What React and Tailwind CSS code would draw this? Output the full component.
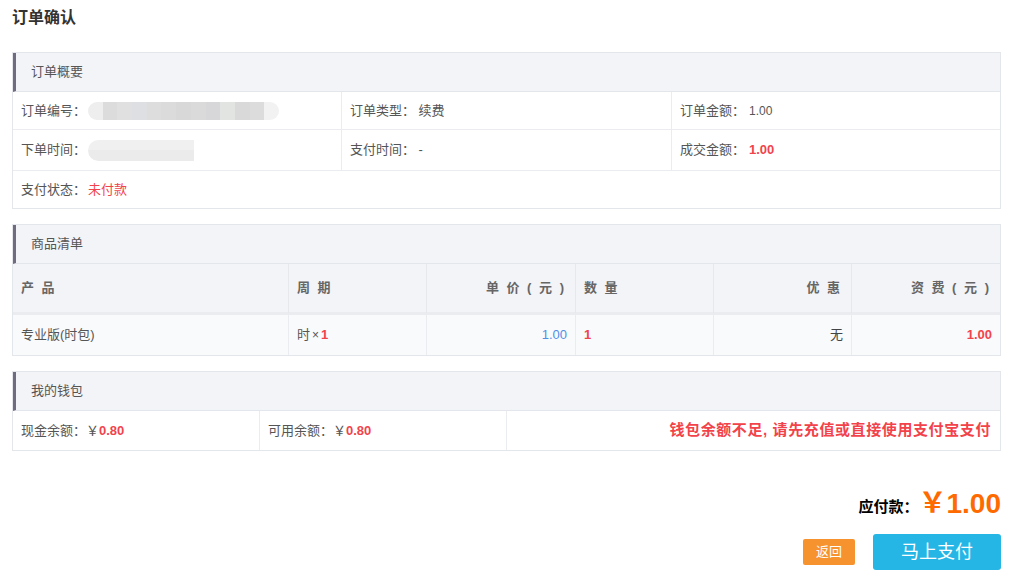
const font = "font-['Liberation_Sans','Noto_Sans_CJK_SC',sans-serif]"

function SectionHead({ title }) {
  return (
    <div className="h-[39px] flex items-center bg-[#f3f4f7] border-b border-[#e3e6eb] border-l-[3px] border-l-[#6f6c80] pl-[15px] text-[13px] text-[#555]">
      {title}
    </div>
  )
}

function Blur({ w, cells }) {
  return (
    <span className="inline-flex h-[18px] rounded-full overflow-hidden align-middle" style={{ width: w }}>
      {cells.map((c, i) => (
        <span key={i} className="flex-1 h-full" style={{ backgroundColor: c }} />
      ))}
    </span>
  )
}

export default function App() {
  return (
    <div className={`${font} bg-white w-[1011px] h-[583px] pl-[12px] pr-[10px] pt-[7px] text-[13px] text-[#555]`}>
      <h1 className="text-[16px] font-bold text-[#333] h-[22px] leading-[22px]">订单确认</h1>

      {/* 订单概要 */}
      <div className="mt-[23px] border border-[#e3e6eb]">
        <SectionHead title="订单概要" />
        <div className="grid grid-cols-[329px_330px_1fr]">
          <div className="h-[38px] flex items-center pl-[8px] border-b border-r border-[#eaecef]">
            订单编号：
            <span className="ml-[2px]">
              <Blur w={191} cells={['#eeeeee', '#dcdcdc', '#e0e0e0', '#dedfe2', '#dddddd', '#dcdbdb', '#d9d8d9', '#dadada', '#d7d7d9', '#e2e4e2', '#d9d9d9', '#dcdcdc', '#f2f2f2']} />
            </span>
          </div>
          <div className="h-[38px] flex items-center pl-[8px] border-b border-r border-[#eaecef]">订单类型： 续费</div>
          <div className="h-[38px] flex items-center pl-[8px] border-b border-[#eaecef]">订单金额： <span className="ml-[4px] text-[12px]">1.00</span></div>

          <div className="h-[41px] flex items-center pl-[8px] border-b border-r border-[#eaecef]">
            下单时间：
            <span className="ml-[2px] inline-flex flex-col w-[106px] h-[21px] overflow-hidden rounded-l-full">
              <span className="flex-1 bg-[#f0f0f0]" />
              <span className="flex-1 bg-[#ebebeb]" />
            </span>
          </div>
          <div className="h-[41px] flex items-center pl-[8px] border-b border-r border-[#eaecef]">支付时间： -</div>
          <div className="h-[41px] flex items-center pl-[8px] border-b border-[#eaecef]">
            成交金额：<span className="ml-[4px] text-[#f2434b] font-bold">1.00</span>
          </div>

          <div className="col-span-3 h-[37px] flex items-center pl-[8px]">
            支付状态：<span className="ml-[2px] text-[#f2434b]">未付款</span>
          </div>
        </div>
      </div>

      {/* 商品清单 */}
      <div className="mt-[15px] border border-[#e3e6eb]">
        <SectionHead title="商品清单" />
        <div className="grid grid-cols-[276px_138px_149px_138px_138px_1fr]">
          {[
            ['产 品', 'left'],
            ['周 期', 'left'],
            ['单 价 ( 元 )', 'right'],
            ['数 量', 'left'],
            ['优 惠', 'right'],
            ['资 费 ( 元 )', 'right'],
          ].map(([t, a], i) => (
            <div
              key={i}
              className={`h-[51px] flex items-center pl-[8px] pr-[9px] bg-[#f3f4f7] border-b-[3px] border-[#ebecef] font-bold tracking-[2px] text-[#666] ${a === 'right' ? 'justify-end' : ''} ${i < 5 ? 'border-r border-r-[#e6e8eb]' : ''}`}
            >
              {t}
            </div>
          ))}
          <div className="h-[40px] flex items-center px-[8px] bg-[#f9fafc] border-r border-[#eaecef]">专业版(时包)</div>
          <div className="h-[40px] flex items-center px-[8px] bg-[#f9fafc] border-r border-[#eaecef]">
            时<span className="mx-[2px] text-[12px]">×</span><span className="text-[#f2434b] font-bold">1</span>
          </div>
          <div className="h-[40px] flex items-center justify-end px-[8px] bg-[#f9fafc] border-r border-[#eaecef] text-[#4f8fe8]">1.00</div>
          <div className="h-[40px] flex items-center px-[8px] bg-[#f9fafc] border-r border-[#eaecef] text-[#f2434b] font-bold">1</div>
          <div className="h-[40px] flex items-center justify-end px-[8px] bg-[#f9fafc] border-r border-[#eaecef] text-[#444]">无</div>
          <div className="h-[40px] flex items-center justify-end px-[8px] bg-[#f9fafc] text-[#f2434b] font-bold">1.00</div>
        </div>
      </div>

      {/* 我的钱包 */}
      <div className="mt-[15px] border border-[#e3e6eb]">
        <SectionHead title="我的钱包" />
        <div className="grid grid-cols-[247px_247px_1fr]">
          <div className="h-[39px] flex items-center pl-[8px] border-r border-[#eaecef]">
            现金余额：￥<span className="text-[#f2434b] font-bold">0.80</span>
          </div>
          <div className="h-[39px] flex items-center pl-[8px] border-r border-[#eaecef]">
            可用余额：￥<span className="text-[#f2434b] font-bold">0.80</span>
          </div>
          <div className="h-[39px] flex items-center justify-end pr-[9px] text-[15px] tracking-[0.6px] font-bold text-[#f2434b]">
            钱包余额不足, 请先充值或直接使用支付宝支付
          </div>
        </div>
      </div>

      {/* 应付款 */}
      <div className="mt-[35px] flex items-end justify-end h-[36px]">
        <span className="text-[15px] font-bold text-black mb-[4px]">应付款：</span>
        <span className="text-[28px] font-bold text-[#ff6a00] leading-[36px]">￥1.00</span>
      </div>
      <div className="mt-[12px] flex items-center justify-end gap-[18px]">
        <button className="w-[52px] h-[26px] bg-[#f7932f] text-white text-[13px] rounded-[2px]">返回</button>
        <button className="w-[128px] h-[36px] bg-[#25b6e6] text-white text-[18px] rounded-[3px]">马上支付</button>
      </div>
    </div>
  )
}
